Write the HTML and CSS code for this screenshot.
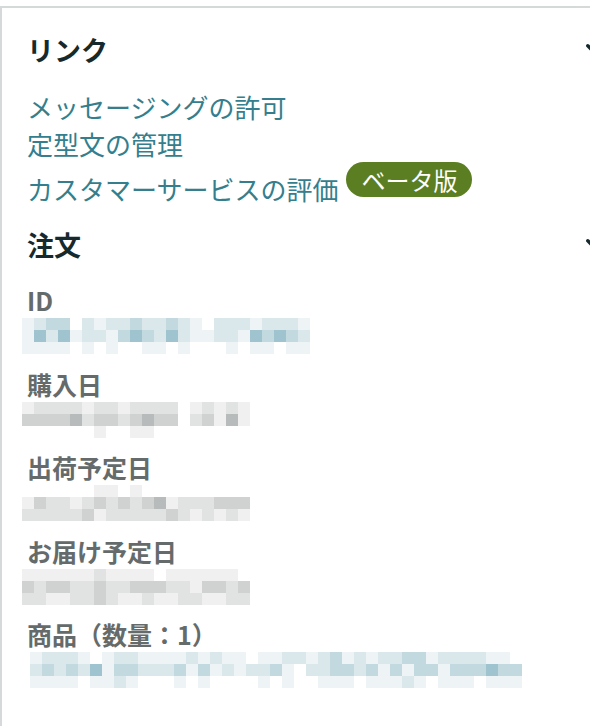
FILE: index.html
```html
<!DOCTYPE html>
<html lang="ja">
<head>
<meta charset="utf-8">
<title>注文詳細</title>
<link rel="stylesheet" href="styles.css">
</head>
<body>
<div class="card">
  <section class="section">
    <div class="section-head">
      <h2>リンク</h2>
      <svg class="chev" viewBox="0 0 14 9" aria-hidden="true"><polyline points="1.8,1.8 7,7 12.2,1.8" fill="none" stroke="#162a2d" stroke-width="3.4" stroke-linecap="round" stroke-linejoin="round"/></svg>
    </div>
    <div class="links">
      <a href="#">メッセージングの許可</a>
      <a href="#">定型文の管理</a>
      <div class="link-row">
        <a href="#">カスタマーサービスの評価</a>
        <span class="badge">ベータ版</span>
      </div>
    </div>
  </section>

  <section class="section">
    <div class="section-head">
      <h2>注文</h2>
      <svg class="chev" viewBox="0 0 14 9" aria-hidden="true"><polyline points="1.8,1.8 7,7 12.2,1.8" fill="none" stroke="#162a2d" stroke-width="3.4" stroke-linecap="round" stroke-linejoin="round"/></svg>
    </div>

    <div class="field">
      <h3>ID</h3>
      <div class="value">
        <div class="pix teal c24">
          <i class="s1"></i><i class="s2"></i><i class="s3"></i><i class="s3"></i><i class="s0"></i><i class="s2"></i><i class="s1"></i><i class="s2"></i><i class="s2"></i><i class="s3"></i><i class="s2"></i><i class="s2"></i><i class="s3"></i><i class="s2"></i><i class="s1"></i><i class="s0"></i><i class="s2"></i><i class="s2"></i><i class="s2"></i><i class="s1"></i><i class="s2"></i><i class="s2"></i><i class="s2"></i><i class="s1"></i>
          <i class="s1"></i><i class="s4"></i><i class="s2"></i><i class="s4"></i><i class="s1"></i><i class="s2"></i><i class="s2"></i><i class="s1"></i><i class="s3"></i><i class="s4"></i><i class="s3"></i><i class="s2"></i><i class="s4"></i><i class="s2"></i><i class="s1"></i><i class="s1"></i><i class="s2"></i><i class="s2"></i><i class="s1"></i><i class="s4"></i><i class="s3"></i><i class="s4"></i><i class="s3"></i><i class="s2"></i>
          <i class="s1"></i><i class="s1"></i><i class="s1"></i><i class="s1"></i><i class="s0"></i><i class="s1"></i><i class="s0"></i><i class="s1"></i><i class="s0"></i><i class="s0"></i><i class="s1"></i><i class="s1"></i><i class="s0"></i><i class="s1"></i><i class="s0"></i><i class="s0"></i><i class="s0"></i><i class="s1"></i><i class="s0"></i><i class="s1"></i><i class="s1"></i><i class="s0"></i><i class="s1"></i><i class="s1"></i>
        </div>
      </div>
    </div>

    <div class="field">
      <h3>購入日</h3>
      <div class="value">
        <div class="pix gray c19">
          <i class="s1"></i><i class="s2"></i><i class="s2"></i><i class="s2"></i><i class="s2"></i><i class="s1"></i><i class="s2"></i><i class="s2"></i><i class="s1"></i><i class="s2"></i><i class="s2"></i><i class="s2"></i><i class="s2"></i><i class="s0"></i><i class="s1"></i><i class="s2"></i><i class="s1"></i><i class="s2"></i><i class="s1"></i>
          <i class="s3"></i><i class="s3"></i><i class="s3"></i><i class="s3"></i><i class="s4"></i><i class="s2"></i><i class="s3"></i><i class="s3"></i><i class="s2"></i><i class="s3"></i><i class="s4"></i><i class="s3"></i><i class="s3"></i><i class="s0"></i><i class="s2"></i><i class="s3"></i><i class="s1"></i><i class="s4"></i><i class="s1"></i>
          <i class="s0"></i><i class="s0"></i><i class="s0"></i><i class="s0"></i><i class="s0"></i><i class="s0"></i><i class="s1"></i><i class="s0"></i><i class="s0"></i><i class="s1"></i><i class="s1"></i><i class="s0"></i><i class="s0"></i><i class="s0"></i><i class="s0"></i><i class="s0"></i><i class="s0"></i><i class="s0"></i><i class="s0"></i>
        </div>
      </div>
    </div>

    <div class="field">
      <h3>出荷予定日</h3>
      <div class="value">
        <div class="pix gray c19">
          <i class="s0"></i><i class="s0"></i><i class="s0"></i><i class="s0"></i><i class="s0"></i><i class="s0"></i><i class="s1"></i><i class="s1"></i><i class="s0"></i><i class="s1"></i><i class="s0"></i><i class="s0"></i><i class="s0"></i><i class="s0"></i><i class="s0"></i><i class="s0"></i><i class="s0"></i><i class="s0"></i><i class="s0"></i>
          <i class="s1"></i><i class="s3"></i><i class="s2"></i><i class="s2"></i><i class="s1"></i><i class="s2"></i><i class="s3"></i><i class="s2"></i><i class="s3"></i><i class="s2"></i><i class="s3"></i><i class="s4"></i><i class="s1"></i><i class="s2"></i><i class="s2"></i><i class="s2"></i><i class="s3"></i><i class="s3"></i><i class="s3"></i>
          <i class="s2"></i><i class="s2"></i><i class="s2"></i><i class="s2"></i><i class="s2"></i><i class="s3"></i><i class="s1"></i><i class="s2"></i><i class="s2"></i><i class="s2"></i><i class="s2"></i><i class="s2"></i><i class="s3"></i><i class="s2"></i><i class="s1"></i><i class="s2"></i><i class="s1"></i><i class="s2"></i><i class="s1"></i>
        </div>
      </div>
    </div>

    <div class="field">
      <h3>お届け予定日</h3>
      <div class="value">
        <div class="pix gray c19">
          <i class="s1"></i><i class="s1"></i><i class="s1"></i><i class="s1"></i><i class="s1"></i><i class="s1"></i><i class="s2"></i><i class="s1"></i><i class="s1"></i><i class="s1"></i><i class="s1"></i><i class="s0"></i><i class="s1"></i><i class="s1"></i><i class="s1"></i><i class="s1"></i><i class="s1"></i><i class="s1"></i><i class="s0"></i>
          <i class="s3"></i><i class="s2"></i><i class="s3"></i><i class="s3"></i><i class="s2"></i><i class="s2"></i><i class="s3"></i><i class="s2"></i><i class="s2"></i><i class="s3"></i><i class="s3"></i><i class="s3"></i><i class="s2"></i><i class="s2"></i><i class="s1"></i><i class="s3"></i><i class="s3"></i><i class="s2"></i><i class="s3"></i>
          <i class="s2"></i><i class="s2"></i><i class="s1"></i><i class="s1"></i><i class="s2"></i><i class="s2"></i><i class="s3"></i><i class="s2"></i><i class="s1"></i><i class="s1"></i><i class="s2"></i><i class="s1"></i><i class="s1"></i><i class="s2"></i><i class="s2"></i><i class="s1"></i><i class="s1"></i><i class="s2"></i><i class="s2"></i>
        </div>
      </div>
    </div>

    <div class="field">
      <h3>商品（数量：1）</h3>
      <div class="value">
        <div class="pix teal c41 item">
          <i class="s1"></i><i class="s2"></i><i class="s2"></i><i class="s2"></i><i class="s1"></i><i class="s0"></i><i class="s1"></i><i class="s2"></i><i class="s2"></i><i class="s1"></i><i class="s1"></i><i class="s1"></i><i class="s1"></i><i class="s2"></i><i class="s1"></i><i class="s2"></i><i class="s1"></i><i class="s1"></i><i class="s0"></i><i class="s1"></i><i class="s1"></i><i class="s2"></i><i class="s2"></i><i class="s1"></i><i class="s2"></i><i class="s3"></i><i class="s1"></i><i class="s2"></i><i class="s1"></i><i class="s2"></i><i class="s2"></i><i class="s3"></i><i class="s3"></i><i class="s1"></i><i class="s2"></i><i class="s2"></i><i class="s2"></i><i class="s2"></i><i class="s1"></i><i class="s1"></i><i class="s0"></i>
          <i class="s2"></i><i class="s3"></i><i class="s2"></i><i class="s3"></i><i class="s2"></i><i class="s4"></i><i class="s1"></i><i class="s3"></i><i class="s3"></i><i class="s2"></i><i class="s2"></i><i class="s2"></i><i class="s3"></i><i class="s1"></i><i class="s3"></i><i class="s1"></i><i class="s2"></i><i class="s1"></i><i class="s2"></i><i class="s2"></i><i class="s3"></i><i class="s1"></i><i class="s0"></i><i class="s2"></i><i class="s2"></i><i class="s3"></i><i class="s3"></i><i class="s2"></i><i class="s3"></i><i class="s1"></i><i class="s3"></i><i class="s1"></i><i class="s3"></i><i class="s3"></i><i class="s1"></i><i class="s3"></i><i class="s3"></i><i class="s3"></i><i class="s4"></i><i class="s3"></i><i class="s3"></i>
          <i class="s1"></i><i class="s1"></i><i class="s1"></i><i class="s1"></i><i class="s0"></i><i class="s1"></i><i class="s1"></i><i class="s2"></i><i class="s1"></i><i class="s0"></i><i class="s0"></i><i class="s0"></i><i class="s1"></i><i class="s0"></i><i class="s1"></i><i class="s0"></i><i class="s0"></i><i class="s0"></i><i class="s0"></i><i class="s1"></i><i class="s0"></i><i class="s1"></i><i class="s0"></i><i class="s0"></i><i class="s1"></i><i class="s1"></i><i class="s1"></i><i class="s0"></i><i class="s1"></i><i class="s1"></i><i class="s1"></i><i class="s2"></i><i class="s1"></i><i class="s0"></i><i class="s1"></i><i class="s1"></i><i class="s1"></i><i class="s0"></i><i class="s1"></i><i class="s1"></i><i class="s1"></i>
        </div>
      </div>
    </div>
  </section>
</div>
</body>
</html>
```

FILE: styles.css
```css
html, body {
  margin: 0;
  padding: 0;
  background: #ffffff;
  overflow: hidden;
}

body {
  font-family: "Noto Sans CJK JP", "Noto Sans", sans-serif;
  color: #162a2d;
}

.card {
  box-sizing: border-box;
  min-height: calc(100vh - 6px);
  margin-top: 6px;
  border-top: 2px solid #d5d9d9;
  border-left: 2px solid #d5d9d9;
  padding: 24px 25px 0 25px;
  width: 625px;
}

.section-head {
  display: flex;
  justify-content: space-between;
  align-items: flex-start;
  margin-bottom: 20px;
}

.section-head h2 {
  margin: 0;
  font-size: 27px;
  line-height: 36px;
  font-weight: 700;
  color: #162a2d;
}

.chev {
  width: 14px;
  height: 9px;
  margin-top: 12px;
  flex: none;
}

.links {
  display: flex;
  flex-direction: column;
  align-items: flex-start;
  margin-bottom: 20px;
}

.links a {
  font-size: 26px;
  line-height: 37px;
  color: #347e8d;
  text-decoration: none;
}

.link-row {
  display: flex;
  align-items: flex-end;
  gap: 8px;
}

.badge {
  background: #5c7e22;
  color: #ffffff;
  font-size: 24px;
  line-height: 35px;
  padding: 0 15px;
  border-radius: 18px;
  margin-bottom: 10px;
}

.field {
  margin-bottom: 12.5px;
}

.field h3 {
  margin: 0;
  font-size: 25px;
  line-height: 35px;
  font-weight: 700;
  color: #656b6b;
}

.value {
  height: 36px;
  display: flex;
  align-items: flex-start;
}

.pix {
  display: grid;
  grid-auto-rows: 12px;
  margin-left: -5px;
}

.pix i {
  display: block;
}

.pix.item {
  margin-left: 3px;
}

.c19 { grid-template-columns: repeat(19, 12px); }
.c24 { grid-template-columns: repeat(24, 12px); }
.c41 { grid-template-columns: repeat(41, 12px); }

.teal .s0 { background: #ffffff; }
.teal .s1 { background: #eef4f6; }
.teal .s2 { background: #dae8ec; }
.teal .s3 { background: #c2d9e0; }
.teal .s4 { background: #9fc4cf; }

.gray .s0 { background: #ffffff; }
.gray .s1 { background: #f0f0f0; }
.gray .s2 { background: #e1e2e2; }
.gray .s3 { background: #d0d2d2; }
.gray .s4 { background: #b7bbbb; }
```
